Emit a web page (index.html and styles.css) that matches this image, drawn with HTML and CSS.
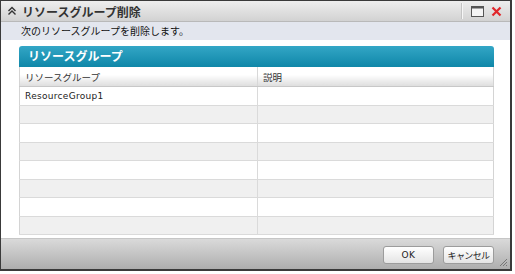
FILE: index.html
```html
<!DOCTYPE html>
<html>
  <head>
    <meta charset="utf-8" />
    <title>リソースグループ削除</title>
    <link rel="stylesheet" href="styles.css">
  </head>
  <body>
    <div class="dialog">
      <div class="titlebar">
        <svg class="collapse" width="10" height="10" viewBox="0 0 10 10">
          <path d="M1.5 5 L5 1.5 L8.5 5 M1.5 8.5 L5 5 L8.5 8.5" fill="none" stroke="#333" stroke-width="1.4" />
        </svg>
        <span class="title">リソースグループ削除</span>
        <span class="sep"></span>
        <svg class="tool" width="13" height="11" viewBox="0 0 13 11">
          <rect x="0.5" y="0.5" width="12" height="10" fill="#f4f4f4" stroke="#555" />
          <rect x="1" y="1" width="11" height="1.5" fill="#555" />
        </svg>
        <svg class="tool close" width="11" height="11" viewBox="0 0 11 11">
          <path d="M1.5 1.5 L9.5 9.5 M9.5 1.5 L1.5 9.5" stroke="#e0262a" stroke-width="2.2" />
        </svg>
      </div>
      <div class="message">次のリソースグループを削除します。</div>
      <div class="content">
        <div class="panel">
          <div class="panel-head">リソースグループ</div>
          <table class="grid">
            <thead>
              <tr><th class="col-name">リソースグループ</th><th>説明</th></tr>
            </thead>
            <tbody>
              <tr><td>ResourceGroup1</td><td></td></tr>
              <tr><td></td><td></td></tr>
              <tr><td></td><td></td></tr>
              <tr><td></td><td></td></tr>
              <tr><td></td><td></td></tr>
              <tr><td></td><td></td></tr>
              <tr><td></td><td></td></tr>
              <tr><td></td><td></td></tr>
            </tbody>
          </table>
        </div>
      </div>
      <div class="footer">
        <button class="btn btn-ok">OK</button>
        <button class="btn">キャンセル</button>
        <svg class="grip" width="10" height="10" viewBox="0 0 10 10">
          <path d="M9 2 L2 9 M9 5 L5 9 M9 8 L8 9" stroke="#777" stroke-width="1" />
        </svg>
      </div>
    </div>
  </body>
</html>
```

FILE: styles.css
```css
body {
  margin: 0;
  background-color: white;
  font-family: "Noto Sans CJK JP", "DejaVu Sans", sans-serif;
  color: #222;
}
.dialog {
  width: 509px;
  height: 268px;
  border: 1px solid #3a3a3a;
  border-right-width: 2px;
  border-bottom-width: 2px;
  display: flex;
  flex-direction: column;
  background-color: white;
}
.titlebar {
  height: 20px;
  display: flex;
  align-items: center;
  padding: 0 8px 0 6px;
  background: linear-gradient(#eeeeee, #d2d2d2);
  border-bottom: 1px solid #b9b9b9;
}
.collapse {
  margin-right: 5px;
}
.title {
  font-size: 12px;
  font-weight: bold;
  color: #333;
  flex: 1;
}
.sep {
  width: 1px;
  height: 16px;
  background-color: #f6f6f6;
  border-left: 1px solid #c4c4c4;
  margin-right: 2px;
}
.tool {
  margin-left: 6px;
}
.close {
  margin-left: 7px;
}
.message {
  height: 18px;
  line-height: 18px;
  padding-left: 20px;
  font-size: 10px;
  background-color: #e3e6ee;
  color: #111;
}
.content {
  flex: 1;
  min-height: 0;
  padding: 6px 16px 0 18px;
}
.panel {
  width: 475px;
}
.panel-head {
  height: 21px;
  line-height: 20px;
  padding-left: 9px;
  font-size: 12px;
  font-weight: bold;
  color: white;
  background: linear-gradient(#33a6c6, #0f87a8);
  border-radius: 3px 3px 0 0;
}
.grid {
  width: 100%;
  border-collapse: collapse;
  font-size: 9.5px;
  border-left: 1px solid #d4d4d4;
  border-right: 1px solid #d4d4d4;
}
.grid th {
  height: 19px;
  padding: 0 5px;
  text-align: left;
  font-weight: normal;
  color: #333;
  background: linear-gradient(#ffffff 40%, #dedede);
  border-bottom: 1px solid #c8c8c8;
}
.grid .col-name {
  width: 227px;
  border-right: 1px solid #d8d8d8;
}
.grid td {
  height: 17.5px;
  padding: 0 5px;
  border-bottom: 1px solid #dadada;
  font-family: "DejaVu Sans", sans-serif;
  font-size: 9px;
  letter-spacing: 0.3px;
}
.grid td:first-child {
  border-right: 1px solid #dadada;
}
.grid tbody tr:nth-child(even) td {
  background-color: #f0f0f0;
}
.footer {
  height: 30px;
  flex-shrink: 0;
  display: flex;
  align-items: center;
  justify-content: flex-end;
  gap: 9px;
  padding-right: 16px;
  position: relative;
  background: linear-gradient(#dadada, #aeaeae);
  border-top: 1px solid #c6c6c6;
}
.btn {
  width: 51px;
  height: 18px;
  padding: 0;
  white-space: nowrap;
  font-family: "Noto Sans CJK JP", "DejaVu Sans", sans-serif;
  font-size: 9px;
  letter-spacing: -0.6px;
  color: #222;
  background: linear-gradient(#ffffff, #e4e4e4);
  border: 1px solid #9c9c9c;
  border-radius: 3px;
  margin-top: 2px;
}
.btn-ok {
  font-family: "DejaVu Sans", sans-serif;
  letter-spacing: 0.5px;
}
.grip {
  position: absolute;
  right: 2px;
  bottom: 2px;
}
```
